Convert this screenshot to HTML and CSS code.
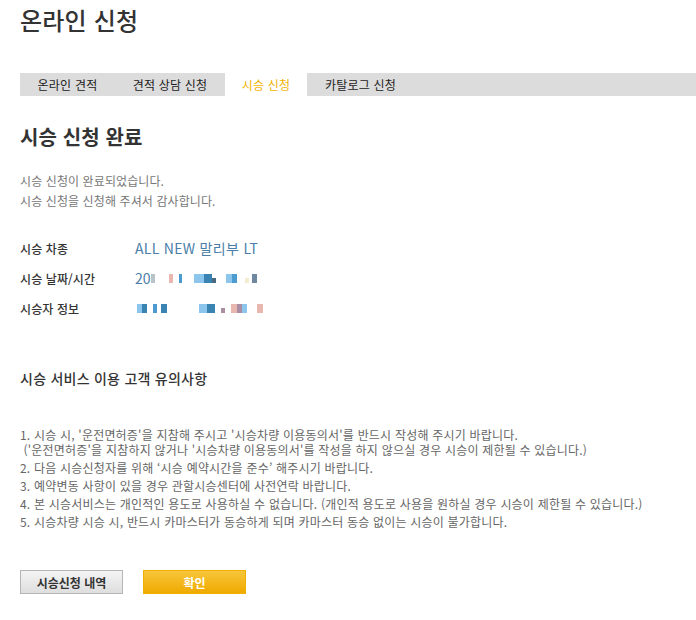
FILE: index.html
```html
<!DOCTYPE html>
<html lang="ko">
<head>
<meta charset="utf-8">
<link rel="stylesheet" href="styles.css">
</head>
<body>
<div class="page">
  <h1 class="title">온라인 신청</h1>
  <nav class="tabs">
    <a class="tab t1">온라인 견적</a>
    <a class="tab t2">견적 상담 신청</a>
    <a class="tab t3 active">시승 신청</a>
    <a class="tab t4">카탈로그 신청</a>
  </nav>
  <h2 class="done-title">시승 신청 완료</h2>
  <p class="desc">시승 신청이 완료되었습니다.<br>시승 신청을 신청해 주셔서 감사합니다.</p>
  <dl class="info">
    <div class="row"><dt>시승 차종</dt><dd class="car">ALL NEW 말리부 LT</dd></div>
    <div class="row"><dt>시승 날짜/시간</dt><dd class="mosaic"><span class="num">20</span><i class="b w4 c-gy"></i><i class="b w4 c-pk gap14"></i><i class="b w3 c-bl gap6"></i><i class="b w10 c-lb gap12"></i><i class="b w8 c-db"></i><i class="b w4 c-dk sm"></i><i class="b w6 c-lb gap10"></i><i class="b w5 c-bl"></i><i class="b w4 c-yl gap8 sm"></i><i class="b w5 c-sl gap3"></i></dd></div>
    <div class="row"><dt>시승자 정보</dt><dd class="mosaic"><i class="b w5 c-lb gap2"></i><i class="b w5 c-db"></i><i class="b w4 c-bl gap6"></i><i class="b w6 c-db gap4"></i><i class="b w8 c-lb gap32"></i><i class="b w8 c-db"></i><i class="b w4 c-mv gap6 sm"></i><i class="b w6 c-pk gap6"></i><i class="b w5 c-mv"></i><i class="b w5 c-lb"></i><i class="b w6 c-pk gap10"></i></dd></div>
  </dl>
  <h3 class="notice-title">시승 서비스 이용 고객 유의사항</h3>
  <ol class="notice">
    <li><span class="ln">1. 시승 시, '운전면허증'을 지참해 주시고 '시승차량 이용동의서'를 반드시 작성해 주시기 바랍니다.</span><span class="ln">&nbsp;('운전면허증'을 지참하지 않거나 '시승차량 이용동의서'를 작성을 하지 않으실 경우 시승이 제한될 수 있습니다.)</span></li>
    <li>2. 다음 시승신청자를 위해 ‘시승 예약시간을 준수’ 해주시기 바랍니다.</li>
    <li>3. 예약변동 사항이 있을 경우 관할시승센터에 사전연락 바랍니다.</li>
    <li>4. 본 시승서비스는 개인적인 용도로 사용하실 수 없습니다. (개인적 용도로 사용을 원하실 경우 시승이 제한될 수 있습니다.)</li>
    <li>5. 시승차량 시승 시, 반드시 카마스터가 동승하게 되며 카마스터 동승 없이는 시승이 불가합니다.</li>
  </ol>
  <div class="buttons">
    <button class="btn btn-gray">시승신청 내역</button>
    <button class="btn btn-yellow">확인</button>
  </div>
</div>
</body>
</html>
```

FILE: styles.css
```css
* { box-sizing: border-box; margin: 0; padding: 0; }
html, body { background: #fff; }
body {
  font-family: "Noto Sans CJK KR", "Noto Sans", sans-serif;
  color: #333;
}
.page { padding: 0 0 0 20px; }
.title {
  font-size: 24px;
  font-weight: 500;
  color: #333;
  line-height: 32px;
  padding-top: 4px;
  letter-spacing: 0.2px;
}
.tabs {
  display: flex;
  margin-top: 37px;
  height: 23px;
  background: #dcdcdc;
}
.tab {
  font-size: 12px;
  line-height: 23px;
  color: #222;
  text-align: center;
  letter-spacing: 0.2px;
}
.t1 { width: 95px; }
.t2 { width: 110px; }
.t3 { width: 82px; }
.t4 { width: 107px; }
.tab.active { background: #fff; color: #f0b400; }
.done-title {
  font-size: 20px;
  font-weight: 700;
  line-height: 28px;
  margin-top: 27px;
  letter-spacing: 0.1px;
}
.desc {
  margin-top: 20px;
  font-size: 12px;
  line-height: 20px;
  color: #777;
  letter-spacing: 0.1px;
}
.info { margin-top: 22px; }
.row {
  display: flex;
  align-items: center;
  height: 30px;
}
.row dt {
  width: 115px;
  font-size: 12px;
  font-weight: 500;
  color: #333;
  letter-spacing: 0.1px;
}
.row dd {
  font-size: 14px;
  color: #4a7ea8;
  display: flex;
  align-items: center;
}
.car { letter-spacing: 0.3px; }
.num { color: #4a7ea8; }
.b { display: inline-block; height: 9px; }
.b.sm { height: 5px; margin-top: 4px; }
.w3 { width: 3px; } .w4 { width: 4px; } .w5 { width: 5px; } .w6 { width: 6px; }
.w8 { width: 8px; } .w10 { width: 10px; }
.gap2 { margin-left: 2px; } .gap3 { margin-left: 3px; } .gap4 { margin-left: 4px; }
.gap6 { margin-left: 6px; } .gap8 { margin-left: 8px; } .gap10 { margin-left: 10px; }
.gap12 { margin-left: 12px; } .gap14 { margin-left: 14px; } .gap32 { margin-left: 32px; }
.c-gy { background: #b9c4c9; }
.c-pk { background: #e8b7b0; }
.c-bl { background: #4c9bd0; }
.c-lb { background: #8cc6ec; }
.c-db { background: #3a84b4; }
.c-dk { background: #4b6a80; }
.c-yl { background: #f4ecd0; }
.c-sl { background: #6f87a0; }
.c-mv { background: #a98ea4; }
.notice-title {
  margin-top: 45px;
  font-size: 14px;
  font-weight: 500;
  line-height: 20px;
  letter-spacing: 0.25px;
}
.notice {
  list-style: none;
  margin-top: 39px;
  font-size: 12px;
  line-height: 15px;
  color: #666;
  letter-spacing: 0.2px;
}
.notice li { margin-bottom: 3px; }
.notice .ln { display: block; height: 15px; }
.buttons {
  display: flex;
  gap: 20px;
  margin-top: 41px;
}
.btn {
  width: 103px;
  height: 24px;
  font-family: inherit;
  font-size: 12px;
  font-weight: 700;
  cursor: pointer;
}
.btn-gray {
  background: linear-gradient(#f4f4f4, #dedede);
  border: 1px solid #b5b5b5;
  color: #333;
}
.btn-yellow {
  background: linear-gradient(#f7c53a, #f0aa00);
  border: 1px solid #f0b000;
  color: #fff;
}
```
